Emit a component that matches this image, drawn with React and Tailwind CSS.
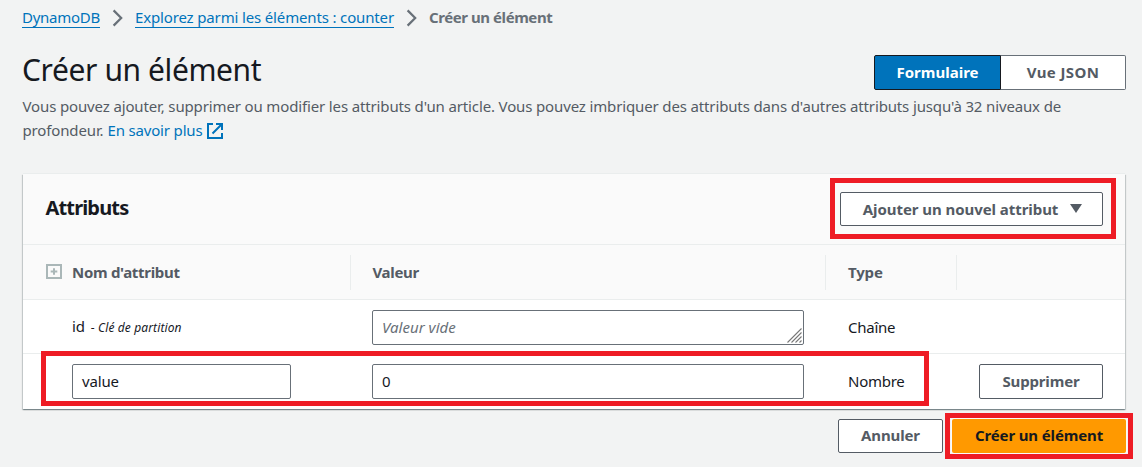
function Chevron() {
  return (
    <svg className="mx-[12px] h-[18px] w-[11px] shrink-0" viewBox="0 0 11 18" fill="none" stroke="#687078" strokeWidth="2.2">
      <path d="M1.6 1.4 L9.2 9 L1.6 16.6" />
    </svg>
  );
}

function ExternalIcon() {
  return (
    <svg className="mt-px ml-[5px] h-4 w-4" viewBox="0 0 16 16" fill="none" stroke="#0073bb" strokeWidth="2">
      <path d="M6 1H1v14h14v-5" />
      <path d="M9 1h6v6M15 1L5.5 10.5" />
    </svg>
  );
}

function ResizeHandle() {
  return (
    <svg className="absolute right-[1px] bottom-[1px] h-[15px] w-[15px]" viewBox="0 0 15 15" stroke="#777" strokeWidth="1.1">
      <path d="M0.5 14.5L14.5 0.5M4.5 14.5L14.5 4.5M8.5 14.5L14.5 8.5M12.5 14.5L14.5 12.5" />
    </svg>
  );
}

const button =
  "flex items-center justify-center rounded-[2px] border border-[#545b64] bg-white font-bold text-[#545b64]";
const field = "flex h-[35px] items-center rounded-[2px] border border-[#687078] bg-white pl-[9px]";
const columns = "grid grid-cols-[328px_475px_131px_168px]";

export default function App() {
  return (
    <div className="relative h-[467px] w-[1142px] overflow-hidden bg-[#f2f3f3] pl-[23px] font-['Noto_Sans','Open_Sans',sans-serif] text-[15px] tracking-[-0.14px] whitespace-nowrap text-[#16191f]">
      <nav className="flex h-[35px] items-center">
        <a className="-ml-px mt-[2px] h-[18px] w-[78px] border-b border-[#0073bb] leading-[15px] tracking-[-0.26px] text-[#0073bb]">DynamoDB</a>
        <Chevron />
        <a className="mt-[2px] h-[18px] w-[259px] border-b border-[#0073bb] leading-[15px] tracking-[-0.15px] text-[#0073bb]">Explorez parmi les éléments : counter</a>
        <Chevron />
        <span className="font-bold tracking-[-0.43px] text-[#687078]">Créer un élément</span>
      </nav>

      <header className="flex h-[59px] w-[1103px] justify-between">
        <h1 className="mt-[15px] -ml-[1px] text-[30px] leading-[40px] tracking-[-0.4px]">Créer un élément</h1>
        <div className="mt-[20px] flex h-[35px]">
          <button className="w-[127px] rounded-l-[2px] border border-[#16191f] bg-[#0073bb] pb-px font-bold tracking-[0.02px] text-white">Formulaire</button>
          <button className="w-[125px] rounded-r-[2px] border border-l-0 border-[#687078] bg-white pb-px font-bold tracking-[0.4px] text-[#545b64]">Vue JSON</button>
        </div>
      </header>

      <div className="-ml-[0.5px] leading-6 text-[#545b64]">
        <p>Vous pouvez ajouter, supprimer ou modifier les attributs d'un article. Vous pouvez imbriquer des attributs dans d'autres attributs jusqu'à 32 niveaux de</p>
        <p className="flex items-center">
          <span className="w-[85px]">profondeur.</span>
          <a className="tracking-[-0.17px] text-[#0073bb]">En savoir plus</a>
          <ExternalIcon />
        </p>
      </div>

      <section className="mt-[32px] h-[235px] w-[1102px] bg-white shadow-[0_1px_1px_0_rgba(0,28,36,0.3),1px_1px_1px_0_rgba(0,28,36,0.15),-1px_1px_1px_0_rgba(0,28,36,0.15),0_-1px_0_0_#eaeded]">
        <div className="flex h-[71px] items-center justify-between border-b border-[#eaeded] bg-[#fafafa] pr-[22px] pl-[22.5px]">
          <h2 className="pb-[2px] text-[20px] font-bold tracking-[-0.85px]">Attributs</h2>
          <button className={`${button} h-[34px] w-[263px] pl-[2px] tracking-[-0.06px]`}>
            Ajouter un nouvel attribut
            <svg className="mb-[2px] ml-[12px] h-[9px] w-[12px]" viewBox="0 0 12 9" fill="#545b64"><path d="M0 0H12L6 9z" /></svg>
          </button>
        </div>

        <div className={`${columns} h-[55px] items-center border-b border-[#eaeded] bg-[#fafafa] font-bold text-[#545b64]`}>
          <div className="flex h-[35px] items-center border-r border-[#eaeded] pl-[23px]">
            <svg className="mb-[2px] mr-[10px] h-[15px] w-[16px]" viewBox="0 0 16 15" fill="none" stroke="#aab7b8" strokeWidth="2">
              <path d="M1 1H15V14H1zM8 4.2V10.8M4.7 7.5H11.3" />
            </svg>
            <span className="tracking-[-0.3px]">Nom d'attribut</span>
          </div>
          <div className="flex h-[35px] items-center border-r border-[#eaeded] pl-[21.5px] tracking-[-0.33px]">Valeur</div>
          <div className="flex h-[35px] items-center border-r border-[#eaeded] pl-[22px] tracking-[-0.15px]">Type</div>
        </div>

        <div className={`${columns} h-[54px] items-center border-b border-[#eaeded]`}>
          <div className="flex items-baseline pl-[49px]">
            id<span className="ml-[6px] text-[12px] tracking-[0.12px]">- <i>Clé de partition</i></span>
          </div>
          <div className="pt-px pl-[21px]">
            <div className={`${field} relative mt-px w-[432px]`}>
              <i className="pb-px tracking-[0.03px] text-[#687078]">Valeur vide</i>
              <ResizeHandle />
            </div>
          </div>
          <div className="pt-px pl-[22px] tracking-[-0.25px]">Chaîne</div>
        </div>

        <div className={`${columns} h-[54px] items-center`}>
          <div className="pl-[49px]"><div className={`${field} w-[219px]`}>value</div></div>
          <div className="pl-[21px]"><div className={`${field} w-[432px]`}>0</div></div>
          <div className="pl-[22px] tracking-[-0.25px]">Nombre</div>
          <div className="pl-[22px]"><button className={`${button} h-[35px] w-[124px]`}>Supprimer</button></div>
        </div>
      </section>

      <footer className="mt-[10px] flex w-[1103px] justify-end gap-[9px]">
        <button className={`${button} h-[34px] w-[105px] pb-[2px]`}>Annuler</button>
        <button className="h-[34px] w-[174px] rounded-[2px] bg-[#ff9900] pb-[2px] font-bold tracking-[-0.13px] text-[#16191f] shadow-[0_0_0_1px_#fafafa]">Créer un élément</button>
      </footer>

      <div className="absolute top-[178px] left-[830px] h-[61px] w-[286px] border-[5px] border-[#ee1c25]" />
      <div className="absolute top-[351px] left-[41px] h-[55px] w-[888px] border-[5px] border-[#ee1c25]" />
      <div className="absolute top-[413px] left-[945px] h-[46px] w-[188px] border-[5px] border-[#ee1c25]" />
    </div>
  );
}
